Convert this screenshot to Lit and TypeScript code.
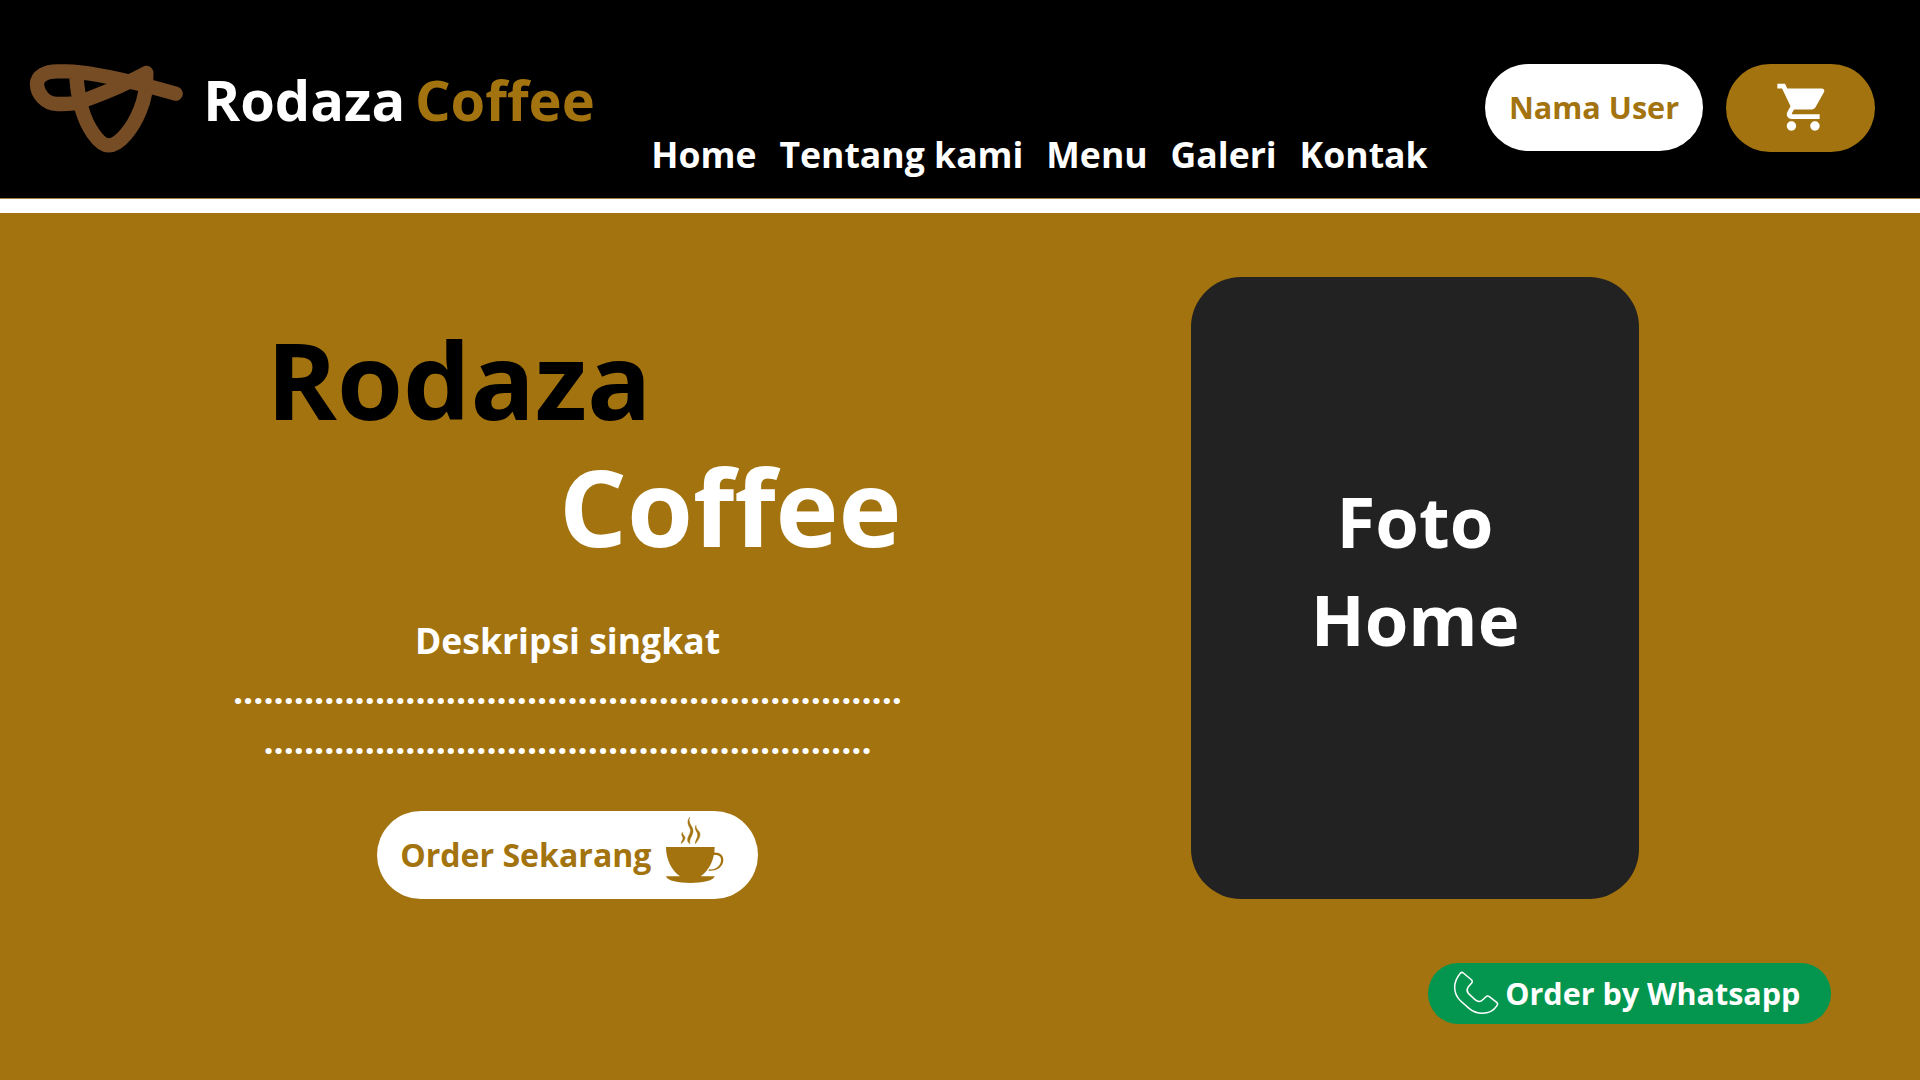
import { LitElement, html, css } from "lit";
import { customElement } from "lit/decorators.js";

const NAV = ["Home", "Tentang kami", "Menu", "Galeri", "Kontak"];

@customElement("site-header")
class SiteHeader extends LitElement {
  static styles = css`
    :host { display: block; }
    .bar {
      display: flex;
      align-items: flex-start;
      box-sizing: border-box;
      height: 199px;
      padding: 0 45px 0 20px;
      background: #000;
      border-bottom: 1px solid #a2803a;
    }
    .stripe { height: 14px; background: #fff; }
    .logo { flex: none; width: 175px; height: 105px; margin-top: 55px; }
    .brand {
      display: flex;
      gap: 9.700px;
      margin: 71px 0 0 8.2px;
      font-size: 56px;
      line-height: 56px;
      color: #fff;
    }
    .accent { color: #a2730f; }
    .nav {
      display: flex;
      gap: 22.9px;
      margin: 136px 0 0 56.500px;
      font-size: 35.6px;
      line-height: 36px;
      color: #fff;
      white-space: nowrap;
    }
    .actions { display: flex; gap: 23px; margin: 64px 0 0 auto; }
    .pill {
      display: flex;
      align-items: center;
      justify-content: center;
      box-sizing: border-box;
      border-radius: 44px;
    }
    .user {
      width: 218px;
      height: 87px;
      padding-bottom: 2px;
      background: #fff;
      color: #a2730f;
      font-size: 30.6px;
      line-height: 40px;
      white-space: nowrap;
    }
    .cart { width: 149px; height: 88px; padding-left: 4.500px; background: #a2730f; }
    .cart svg { width: 56.4px; height: 56.4px; margin-bottom: 1px; }
  `;
  render() {
    return html`
      <header class="bar">
        <svg class="logo" viewBox="0 0 525 315" fill="none" stroke="#754c24" stroke-width="43" stroke-linecap="round" stroke-linejoin="round">
          <path d="M467 116L380 92C300 72 205 49 140 49H112C78 49 51 62 51 88C51 113 74 147 112 147C150 147 172 146 199 134C240 118 270 106 297 94C330 79 350 70 379 54C380 100 376 130 360 166C340 216 300 271 266 271C236 271 200 214 185 160C173 118 172 100 168 52"/>
        </svg>
        <div class="brand"><span>Rodaza</span><span class="accent">Coffee</span></div>
        <nav class="nav">${NAV.map((n) => html`<span>${n}</span>`)}</nav>
        <div class="actions">
          <div class="pill user">Nama User</div>
          <div class="pill cart">
            <svg viewBox="0 0 24 24" fill="#fff"><path d="M7 18c-1.1 0-1.99.9-1.99 2S5.900 22 7 22s2-.9 2-2-.9-2-2-2zM1 2v2h2l3.600 7.590-1.350 2.450c-.16.28-.25.61-.25.96 0 1.100.9 2 2 2h12v-2H7.420c-.14 0-.25-.11-.25-.25l.03-.12.9-1.630h7.450c.75 0 1.410-.41 1.750-1.030l3.580-6.490c.08-.14.12-.31.12-.48 0-.55-.45-1-1-1H5.210l-.94-2H1zm16 16c-1.100 0-1.990.9-1.990 2s.89 2 1.990 2 2-.9 2-2-.9-2-2-2z"/></svg>
          </div>
        </div>
      </header>
      <div class="stripe"></div>
    `;
  }
}

@customElement("home-hero")
class HomeHero extends LitElement {
  static styles = css`
    :host { display: block; }
    .hero {
      display: grid;
      grid-template-columns: 1135px 448px;
      column-gap: 56px;
      align-items: start;
      box-sizing: border-box;
      height: 867px;
      background: #a2730f;
      color: #fff;
    }
    .intro {
      display: flex;
      flex-direction: column;
      align-items: center;
      padding-top: 102px;
    }
    .title {
      display: flex;
      flex-direction: column;
      align-self: flex-start;
      width: 635px;
      margin: 0 0 46px 266.600px;
      font-size: 106.7px;
      line-height: 127px;
      font-weight: 700;
    }
    .dark { color: #000; }
    .end { align-self: flex-end; }
    .desc { font-size: 35.55px; line-height: 50px; text-align: center; white-space: nowrap; }
    .order {
      display: flex;
      align-items: flex-start;
      box-sizing: border-box;
      width: 381.600px;
      height: 87.500px;
      margin: 46.200px 0 0;
      padding-left: 23.500px;
      border-radius: 44px;
      background: #fff;
      color: #a2730f;
      font-size: 32.1px;
      line-height: 88px;
      white-space: nowrap;
    }
    .cup { flex: none; width: 70px; height: 72px; margin: 1px 0 0 8.400px; }
    .photo {
      box-sizing: border-box;
      height: 621.700px;
      margin-top: 64px;
      padding-top: 194.900px;
      border-radius: 50px;
      background: #222;
      font-size: 70.6px;
      line-height: 98px;
      text-align: center;
    }
  `;
  render() {
    return html`
      <section class="hero">
        <div class="intro">
          <div class="title"><span class="dark">Rodaza</span><span class="end">Coffee</span></div>
          <div class="desc">
            <div>Deskripsi singkat</div>
            <div>${".".repeat(66)}</div>
            <div>${".".repeat(60)}</div>
          </div>
          <div class="order">
            <span>Order Sekarang</span>
            <svg class="cup" viewBox="30 21 210 216" fill="#a2730f">
              <path d="M48 126H194C194 164 176 198 152 214H194C190 228 156 234 121 234S52 228 48 214H90C66 198 48 164 48 126Z"/>
              <path d="M190 143C210 141 220 152 220 165C220 185 200 200 175 197L178 193C196 196 213 182 213 165C213 153 206 149 190 150Z"/>
              <g stroke="#a2730f" stroke-width="1.500" stroke-linejoin="round">
                <path d="M119 37C108 53 117 62 121 72C125 84 112 94 113 106C113 111 116 114 120 116C115 103 129 92 129 77C129 64 112 54 119 37Z"/>
                <path d="M138 61C132 73 141 79 143 87C145 97 136 105 136 116C142 108 150 99 150 88C150 78 136 74 138 61Z"/>
                <path d="M97 82C92 90 99 94 99 100C99 106 93 109 94 116C99 110 105 105 105 98C105 92 97 90 97 82Z"/>
              </g>
            </svg>
          </div>
        </div>
        <div class="photo"><div>Foto</div><div>Home</div></div>
      </section>
    `;
  }
}

@customElement("app-root")
class AppRoot extends LitElement {
  static styles = css`
    :host {
      display: block;
      position: relative;
      width: 1920px;
      height: 1080px;
      overflow: hidden;
      font-family: "Open Sans", "Noto Sans", sans-serif;
      font-weight: 700;
    }
    .whatsapp {
      position: absolute;
      right: 89px;
      bottom: 56.400px;
      display: flex;
      align-items: flex-start;
      box-sizing: border-box;
      width: 403.300px;
      height: 60.600px;
      padding-left: 17.500px;
      border-radius: 30.2px;
      background: #04964f;
      color: #fff;
      font-size: 30.5px;
      line-height: 60px;
      white-space: nowrap;
    }
    .phone { flex: none; width: 60px; height: 60px; }
  `;
  render() {
    return html`
      <site-header></site-header>
      <home-hero></home-hero>
      <div class="whatsapp">
        <svg class="phone" viewBox="0 3 180 180" fill="none" stroke="#fff" stroke-width="4.500" stroke-linejoin="round">
          <path d="M55 33L80 54Q84 58 80 63L69 76Q63 85 70 94L90 113Q104 125 115 112L123 104Q127 100 132 103L155 121Q160 125 156 131C147 145 131 154 112 154C95 154 85 150 73 140L47 117C34 105 29 92 29 76C29 60 36 46 46 34Q50 29 55 33Z"/>
        </svg>
        <span>Order by Whatsapp</span>
      </div>
    `;
  }
}
